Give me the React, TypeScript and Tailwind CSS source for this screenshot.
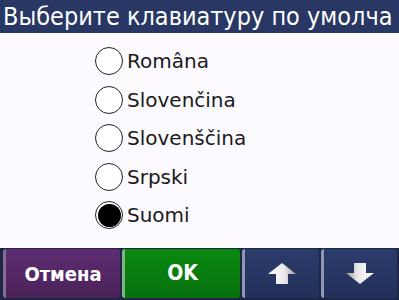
import React from "react";

const langs = ["Româna", "Slovenčina", "Slovenščina", "Srpski", "Suomi"];

function Radio({ checked }: { checked: boolean }) {
  return (
    <span className="w-[28px] h-[28px] rounded-full border-[1.5px] border-[#222] bg-white flex items-center justify-center shrink-0">
      {checked && <span className="w-[23px] h-[23px] rounded-full bg-black" />}
    </span>
  );
}

function Arrow({ down }: { down?: boolean }) {
  const id = down ? "ad" : "au";
  return (
    <svg width="30" height="23" viewBox="0 0 30 23" className={down ? "rotate-180" : ""}>
      <defs>
        <linearGradient id={id} x1="0" y1="0" x2="1" y2="0">
          <stop offset="0" stopColor="#ffffff" />
          <stop offset="0.6" stopColor="#e8e8e8" />
          <stop offset="1" stopColor="#9a9a9a" />
        </linearGradient>
      </defs>
      <path d="M15 1 L29 12 L21 12 L21 22 L9 22 L9 12 L1 12 Z" fill={`url(#${id})`} />
    </svg>
  );
}

export default function App() {
  return (
    <div
      className="w-[399px] h-[300px] flex flex-col bg-[#fcfafe] overflow-hidden"
      style={{ fontFamily: '"DejaVu Sans", sans-serif' }}
    >
      <div
        className="h-[33px] bg-[#283763] text-white text-[25px] leading-[33px] pl-[3px] whitespace-nowrap overflow-hidden shrink-0"
        style={{ fontFamily: '"DejaVu Sans Condensed", "DejaVu Sans", sans-serif' }}
      >
        Выберите клавиатуру по умолча
      </div>
      <div className="flex-1 flex flex-col pl-[95px] pt-[14px] gap-[10.5px]">
        {langs.map((l, i) => (
          <div key={l} className="flex items-center h-[28px]">
            <Radio checked={i === 4} />
            <span className="text-[20px] text-[#1a1a1a] ml-[4px] leading-none">{l}</span>
          </div>
        ))}
      </div>
      <div
        className="h-[52px] bg-[#1d2743] flex items-stretch pl-[3px] pr-[2px] pt-[1px] pb-[2px] gap-[2px] shrink-0"
        style={{ fontFamily: '"DejaVu Sans Condensed", "DejaVu Sans", sans-serif' }}
      >
        <div className="w-[117px] rounded-[3px] bg-gradient-to-b from-[#5e2d72] to-[#4a2159] border-l-[3px] border-[#8a6a94] flex items-center justify-center text-white font-bold text-[20px]">
          Отмена
        </div>
        <div className="w-[118px] rounded-[3px] bg-gradient-to-b from-[#0b8a12] to-[#06700c] border-l-[3px] border-[#7fb487] flex items-center justify-center text-white font-bold text-[21px]">
          OK
        </div>
        <div className="flex-1 rounded-[3px] bg-gradient-to-b from-[#2c3c6b] to-[#22305a] border-l-[3px] border-[#8e98b4] flex items-center justify-center">
          <Arrow />
        </div>
        <div className="flex-1 rounded-[3px] bg-gradient-to-b from-[#2c3c6b] to-[#22305a] border-l-[3px] border-[#8e98b4] flex items-center justify-center">
          <Arrow down />
        </div>
      </div>
    </div>
  );
}
